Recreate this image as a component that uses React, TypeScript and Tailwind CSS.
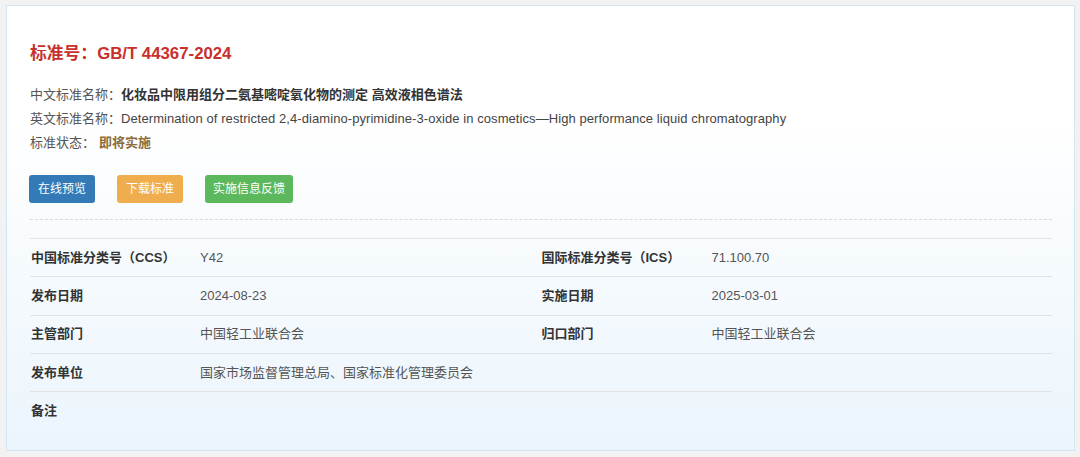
import React from "react";

const rows = [
  [
    ["中国标准分类号（CCS）", "Y42"],
    ["国际标准分类号（ICS）", "71.100.70"],
  ],
  [
    ["发布日期", "2024-08-23"],
    ["实施日期", "2025-03-01"],
  ],
  [
    ["主管部门", "中国轻工业联合会"],
    ["归口部门", "中国轻工业联合会"],
  ],
  [["发布单位", "国家市场监督管理总局、国家标准化管理委员会"]],
];

export default function App() {
  return (
    <div
      className="w-[1080px] h-[457px] bg-[#f3f2f2] pt-[5px] pl-[6px]"
      style={{ fontFamily: '"Liberation Sans", "Noto Sans CJK SC", sans-serif' }}
    >
      <div className="w-[1069px] h-[446px] border border-[#d3e5f0] bg-gradient-to-b from-white from-25% to-[#ebf5fc] pt-[36px] pl-[23px] pr-[22px]">
        {/* Title */}
        <h1 className="h-[24px] leading-[24px] text-[16.8px] font-bold text-[#c9302c]">
          标准号：GB/T 44367-2024
        </h1>

        {/* Names and status */}
        <div className="mt-[17px] text-[13px] leading-[24px] text-[#555]">
          <div>
            中文标准名称：
            <span className="font-bold text-[#333]">
              化妆品中限用组分二氨基嘧啶氧化物的测定 高效液相色谱法
            </span>
          </div>
          <div>
            英文标准名称：
            <span className="text-[#444] tracking-[0.07px]">
              Determination of restricted 2,4-diamino-pyrimidine-3-oxide in cosmetics—High performance liquid chromatography
            </span>
          </div>
          <div>
            标准状态：<span className="ml-[4px] font-bold text-[#8a6d3b]">即将实施</span>
          </div>
        </div>

        {/* Buttons */}
        <div className="mt-[20px] -ml-[1px] flex gap-[22px] text-[12px] text-white">
          <button className="h-[28px] w-[66px] rounded-[3px] bg-[#337ab7]">在线预览</button>
          <button className="h-[28px] w-[66px] rounded-[3px] bg-[#f0ad4e]">下载标准</button>
          <button className="h-[28px] w-[88px] rounded-[3px] bg-[#5cb85c]">实施信息反馈</button>
        </div>

        <div className="mt-[16px] border-t border-dashed border-[#d9d9d9]" />

        {/* Info table */}
        <div className="mt-[18px] border-t border-[#e3e3e3] text-[13px]">
          {rows.map((row, i) => (
            <div
              key={i}
              className="grid grid-cols-[170px_1fr_171px_1fr] h-[38.3px] items-center border-b border-[#e3e3e3]"
            >
              {row.map(([label, value]) => (
                <React.Fragment key={label}>
                  <div className="pl-[1px] font-bold text-[#333]">{label}</div>
                  <div className="text-[#555]">{value}</div>
                </React.Fragment>
              ))}
            </div>
          ))}
          <div className="h-[38px] flex items-center pl-[1px] font-bold text-[#333]">备注</div>
        </div>
      </div>
    </div>
  );
}
